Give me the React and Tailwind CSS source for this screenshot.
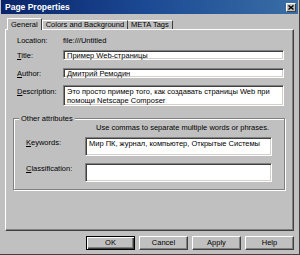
const font = { fontFamily: '"Liberation Sans", Arial, sans-serif' };

function Sunken({ className = "", children }) {
  return (
    <div
      className={`bg-white border border-t-[#808080] border-l-[#808080] border-b-white border-r-white shadow-[inset_1px_1px_0_#404040,inset_-1px_-1px_0_#d4d0c8] px-[3px] text-[7.5px] leading-[9px] text-black ${className}`}
    >
      {children}
    </div>
  );
}

function Label({ first, rest, className = "" }) {
  return (
    <span className={`text-[7.5px] leading-[9px] text-black ${className}`}>
      <span className="underline">{first}</span>
      {rest}
    </span>
  );
}

function Button({ children, isDefault }) {
  return (
    <button
      className={`w-[49px] h-[14px] flex items-center justify-center bg-[#c0c0c0] text-[7.5px] text-black border ${
        isDefault
          ? "border-black shadow-[inset_1px_1px_0_#fff,inset_-1px_-1px_0_#404040,inset_-2px_-2px_0_#808080]"
          : "border-t-white border-l-white border-b-[#404040] border-r-[#404040] shadow-[inset_-1px_-1px_0_#808080]"
      }`}
    >
      {children}
    </button>
  );
}

export default function App() {
  return (
    <div
      style={font}
      className="w-[300px] h-[255px] bg-[#c0c0c0] flex flex-col border-r border-b border-r-[#404040] border-b-[#404040] overflow-hidden"
    >
      {/* title bar */}
      <div className="h-[14px] mx-[1px] flex items-center justify-between bg-gradient-to-r from-[#0a246a] via-[#1c4a94] to-[#3a6ea5] pl-[4px] pr-[2px]">
        <span className="text-white font-bold text-[8.5px] leading-none">Page Properties</span>
        <div className="w-[10px] h-[9px] bg-[#c0c0c0] flex items-center justify-center border border-t-white border-l-white border-b-[#404040] border-r-[#404040]">
          <svg width="6" height="5" viewBox="0 0 6 5">
            <path d="M0.5 0.5 L5.5 4.5 M5.5 0.5 L0.5 4.5" stroke="#000" strokeWidth="1.4" />
          </svg>
        </div>
      </div>

      <div className="flex flex-col px-[5px] pr-[5px]">
        {/* tabs */}
        <div className="flex items-end h-[15px] pl-[2px]">
          <div className="h-[12px] px-[3px] flex items-center bg-[#c0c0c0] border border-b-0 border-t-white border-l-white border-r-[#404040] text-[7.5px] text-black relative top-[1px] z-10">
            General
          </div>
          <div className="h-[9px] px-[3px] flex items-center border border-b-0 border-t-white border-l-white border-r-[#404040] text-[7.5px] text-black">
            Colors and Background
          </div>
          <div className="h-[9px] px-[3px] flex items-center border border-b-0 border-t-white border-l-0 border-r-[#404040] text-[7.5px] text-black">
            META Tags
          </div>
        </div>

        {/* panel */}
        <div className="h-[202px] border border-t-white border-l-white border-b-[#404040] border-r-[#404040] shadow-[inset_-1px_-1px_0_#808080] flex flex-col pl-[11px] pr-[9px]">
          <div className="flex items-center mt-[6px] h-[9px]">
            <span className="w-[46px] text-[7.5px] text-black">Location:</span>
            <span className="text-[7.5px] text-black">file:///Untitled</span>
          </div>

          <div className="flex items-center mt-[5px]">
            <Label first="T" rest="itle:" className="w-[46px]" />
            <Sunken className="flex-1 h-[10px] flex items-center">Пример Web-страницы</Sunken>
          </div>

          <div className="flex items-center mt-[8px]">
            <Label first="A" rest="uthor:" className="w-[46px]" />
            <Sunken className="flex-1 h-[10px] flex items-center">Дмитрий Ремодин</Sunken>
          </div>

          <div className="flex items-start mt-[7px]">
            <Label first="D" rest="escription:" className="w-[46px] mt-[2px]" />
            <Sunken className="flex-1 h-[21px] pt-[1px]">
              Это просто пример того, как создавать страницы Web при помощи Netscape Composer
            </Sunken>
          </div>

          {/* group box */}
          <div className="relative mt-[12px] ml-[-4px] mr-[-1px] h-[72px] border border-[#808080] shadow-[1px_1px_0_#fff,inset_1px_1px_0_#fff] flex flex-col pl-[12px] pr-[12px]">
            <span className="absolute -top-[5px] left-[5px] bg-[#c0c0c0] px-[2px] text-[7.5px] leading-[9px] text-black">
              Other attributes
            </span>
            <div className="mt-[4px] pl-[70px] text-[7.5px] leading-[9px] text-black">
              Use commas to separate multiple words or phrases.
            </div>
            <div className="flex items-start mt-[5px]">
              <Label first="K" rest="eywords:" className="w-[59px] mt-[1px]" />
              <Sunken className="flex-1 h-[19px] pt-[1px]">
                Мир ПК, журнал, компьютер, Открытые Системы
              </Sunken>
            </div>
            <div className="flex items-start mt-[7px]">
              <Label first="C" rest="lassification:" className="w-[59px] mt-[1px]" />
              <Sunken className="flex-1 h-[19px]" />
            </div>
          </div>
        </div>

        {/* buttons */}
        <div className="flex justify-end gap-[4px] mt-[5px] pr-[0px]">
          <Button isDefault>OK</Button>
          <Button>Cancel</Button>
          <Button>Apply</Button>
          <Button>Help</Button>
        </div>
      </div>
    </div>
  );
}
